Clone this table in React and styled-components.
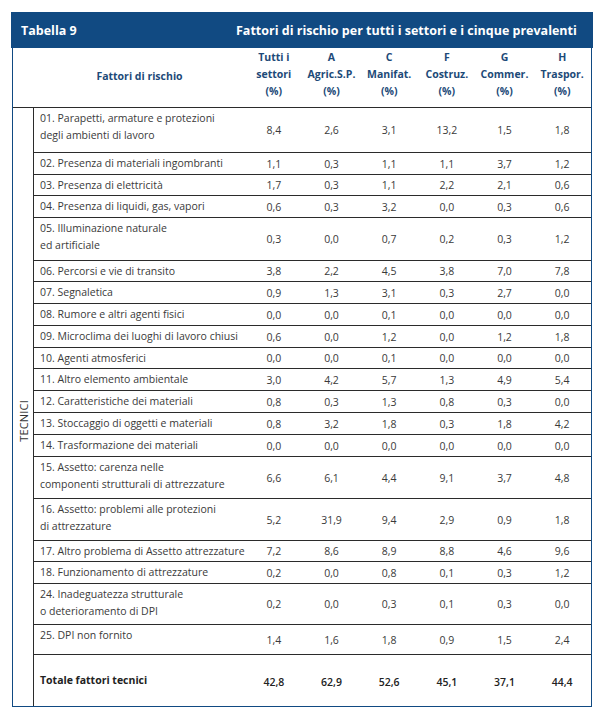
import React from "react"
import styled, { createGlobalStyle } from "styled-components"

const BLUE = "#114a82"
const LINE = "#2b2b2b"

const columns = [
  ["Tutti i", "settori", "(%)"],
  ["A", "Agric.S.P.", "(%)"],
  ["C", "Manifat.", "(%)"],
  ["F", "Costruz.", "(%)"],
  ["G", "Commer.", "(%)"],
  ["H", "Traspor.", "(%)"],
]

const rows = [
  { h: 45, label: ["01. Parapetti, armature e protezioni", "degli ambienti di lavoro"], v: ["8,4", "2,6", "3,1", "13,2", "1,5", "1,8"] },
  { h: 22, label: ["02. Presenza di materiali ingombranti"], v: ["1,1", "0,3", "1,1", "1,1", "3,7", "1,2"] },
  { h: 21, label: ["03. Presenza di elettricità"], v: ["1,7", "0,3", "1,1", "2,2", "2,1", "0,6"] },
  { h: 22, label: ["04. Presenza di liquidi, gas, vapori"], v: ["0,6", "0,3", "3,2", "0,0", "0,3", "0,6"] },
  { h: 43, label: ["05. Illuminazione naturale", "ed artificiale"], v: ["0,3", "0,0", "0,7", "0,2", "0,3", "1,2"] },
  { h: 21, label: ["06. Percorsi e vie di transito"], v: ["3,8", "2,2", "4,5", "3,8", "7,0", "7,8"] },
  { h: 22, label: ["07. Segnaletica"], v: ["0,9", "1,3", "3,1", "0,3", "2,7", "0,0"] },
  { h: 22, label: ["08. Rumore e altri agenti fisici"], v: ["0,0", "0,0", "0,1", "0,0", "0,0", "0,0"] },
  { h: 22, label: ["09. Microclima dei luoghi di lavoro chiusi"], v: ["0,6", "0,0", "1,2", "0,0", "1,2", "1,8"] },
  { h: 21, label: ["10. Agenti atmosferici"], v: ["0,0", "0,0", "0,1", "0,0", "0,0", "0,0"] },
  { h: 22, label: ["11. Altro elemento ambientale"], v: ["3,0", "4,2", "5,7", "1,3", "4,9", "5,4"] },
  { h: 22, label: ["12. Caratteristiche dei materiali"], v: ["0,8", "0,3", "1,3", "0,8", "0,3", "0,0"] },
  { h: 22, label: ["13. Stoccaggio di oggetti e materiali"], v: ["0,8", "3,2", "1,8", "0,3", "1,8", "4,2"] },
  { h: 22, label: ["14. Trasformazione dei materiali"], v: ["0,0", "0,0", "0,0", "0,0", "0,0", "0,0"] },
  { h: 42, label: ["15. Assetto: carenza nelle", "componenti strutturali di attrezzature"], v: ["6,6", "6,1", "4,4", "9,1", "3,7", "4,8"] },
  { h: 42, label: ["16. Assetto: problemi alle protezioni", "di attrezzature"], v: ["5,2", "31,9", "9,4", "2,9", "0,9", "1,8"] },
  { h: 21, label: ["17. Altro problema di Assetto attrezzature"], v: ["7,2", "8,6", "8,9", "8,8", "4,6", "9,6"] },
  { h: 22, label: ["18. Funzionamento di attrezzature"], v: ["0,2", "0,0", "0,8", "0,1", "0,3", "1,2"] },
  { h: 41, label: ["24. Inadeguatezza strutturale", "o deterioramento di DPI"], v: ["0,2", "0,0", "0,3", "0,1", "0,3", "0,0"] },
  { h: 30, label: ["25. DPI non fornito"], v: ["1,4", "1,6", "1,8", "0,9", "1,5", "2,4"] },
]

const total = { h: 51, label: ["Totale fattori tecnici"], v: ["42,8", "62,9", "52,6", "45,1", "37,1", "44,4"] }

const GlobalStyle = createGlobalStyle`
  body {
    margin: 0;
    background: #ffffff;
    font-family: "Open Sans", "Noto Sans", sans-serif;
  }
`

const Page = styled.div`
  padding: 12px 0 0 11px;
`

const Frame = styled.div`
  width: 582px;
`

const TitleBar = styled.div`
  height: 36px;
  background: ${BLUE};
  display: flex;
  align-items: center;
  color: #ffffff;
  font-weight: 700;
  font-size: 12.5px;
  padding: 0 0 0 10px;
  box-sizing: border-box;
`

const TableNo = styled.div`
  width: 215px;
`

const TableTitle = styled.div`
  white-space: nowrap;
`

const Body = styled.div`
  margin: 0 1px;
  border: 1px solid ${BLUE};
  border-top: 0;
`

const HeadRow = styled.div`
  display: grid;
  grid-template-columns: 21px 211px repeat(6, 1fr);
  height: 59px;
  border-bottom: 1px solid ${LINE};
  color: #1d4a78;
  font-weight: 700;
  font-size: 10.5px;
`

const HeadLabel = styled.div`
  display: flex;
  align-items: center;
  justify-content: center;
  padding-bottom: 4px;
`

const HeadCol = styled.div`
  display: flex;
  flex-direction: column;
  align-items: center;
  line-height: 17px;
  padding-top: 1px;
`

const Main = styled.div`
  display: flex;
`

const Side = styled.div`
  width: 20px;
  border-right: 1px solid ${LINE};
  display: flex;
  align-items: center;
  justify-content: center;
  padding-top: 28px;
`

const SideText = styled.span`
  writing-mode: vertical-rl;
  transform: rotate(180deg);
  font-size: 11px;
  color: #333333;
  letter-spacing: 0.2px;
`

const Rows = styled.div`
  flex: 1;
`

const Row = styled.div`
  display: grid;
  grid-template-columns: 211px repeat(6, 1fr);
  height: ${p => p.$h}px;
  box-sizing: border-box;
  border-bottom: ${p => (p.$last ? "0" : `1px solid ${LINE}`)};
  color: ${p => (p.$bold ? "#222222" : "#3a3a3a")};
  font-size: 10.5px;
`

const Label = styled.div`
  padding: ${p => (p.$center ? "0" : "2px")} 0 0 6px;
  line-height: 16.5px;
  display: flex;
  flex-direction: column;
  justify-content: ${p => (p.$center ? "center" : "flex-start")};
  white-space: nowrap;
  font-weight: ${p => (p.$center ? 700 : 400)};
`

const Value = styled.div`
  display: flex;
  align-items: center;
  justify-content: center;
  padding-top: ${p => (p.$bold ? 3 : 0)}px;
  font-weight: ${p => (p.$bold ? 600 : 400)};
`

const DataRow = ({ row, bold, last }) => (
  <Row $h={row.h} $bold={bold} $last={last}>
    <Label $center={bold}>
      {row.label.map(l => (
        <span key={l}>{l}</span>
      ))}
    </Label>
    {row.v.map((v, i) => (
      <Value key={i} $bold={bold}>{v}</Value>
    ))}
  </Row>
)

export default function App() {
  return (
    <Page>
      <GlobalStyle />
      <Frame>
        <TitleBar>
          <TableNo>Tabella 9</TableNo>
          <TableTitle>Fattori di rischio per tutti i settori e i cinque prevalenti</TableTitle>
        </TitleBar>
        <Body>
          <HeadRow>
            <div />
            <HeadLabel>Fattori di rischio</HeadLabel>
            {columns.map((c, i) => (
              <HeadCol key={i}>
                {c.map(t => (
                  <span key={t}>{t}</span>
                ))}
              </HeadCol>
            ))}
          </HeadRow>
          <Main>
            <Side>
              <SideText>TECNICI</SideText>
            </Side>
            <Rows>
              {rows.map((r, i) => (
                <DataRow key={i} row={r} />
              ))}
              <DataRow row={total} bold last />
            </Rows>
          </Main>
        </Body>
      </Frame>
    </Page>
  )
}
